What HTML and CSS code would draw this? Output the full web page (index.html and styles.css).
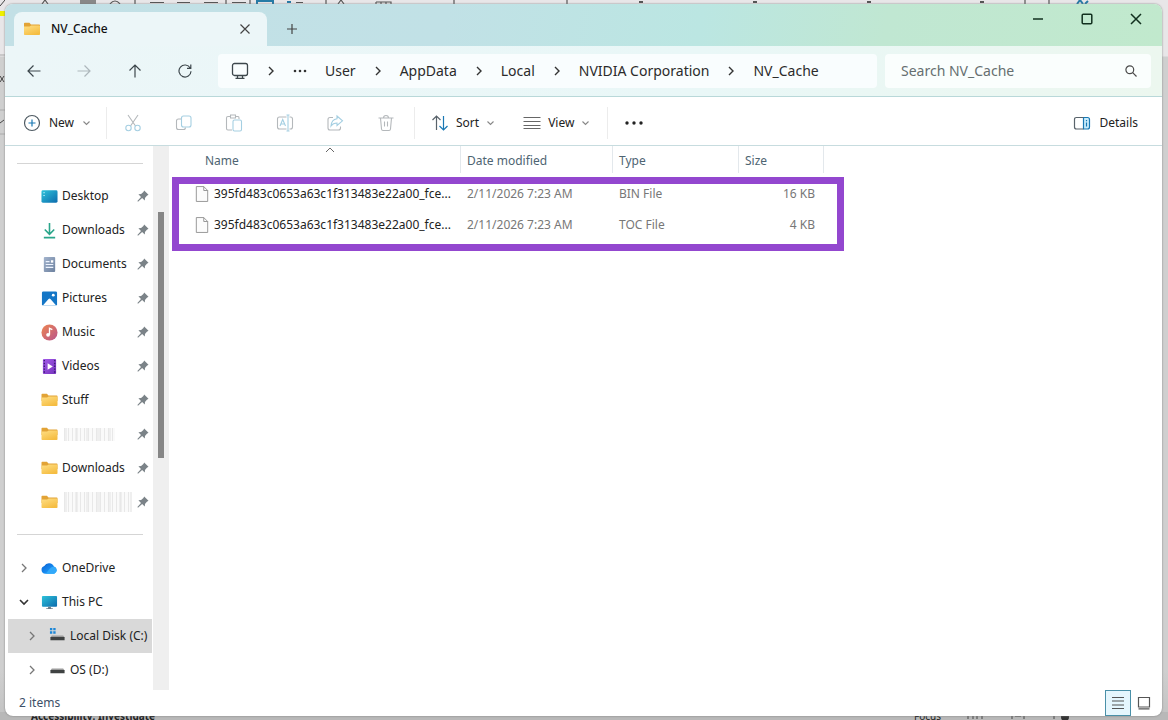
FILE: index.html
```html
<!DOCTYPE html>
<html lang="en">
<head>
<meta charset="utf-8">
<meta name="viewport" content="width=device-width, initial-scale=1">
<title>NV_Cache</title>
<link rel="stylesheet" href="styles.css">
</head>
<body>
<svg class="sprite" aria-hidden="true">
  <defs>
    <linearGradient id="gFolder" x1="0" y1="0" x2="0.6" y2="1"><stop offset="0" stop-color="#ffdf85"/><stop offset="1" stop-color="#f5bd42"/></linearGradient>
    <linearGradient id="gDesk" x1="0" y1="0" x2="1" y2="1"><stop offset="0" stop-color="#2ec3da"/><stop offset="1" stop-color="#0c6bad"/></linearGradient>
    <linearGradient id="gDoc" x1="0" y1="0" x2="1" y2="1"><stop offset="0" stop-color="#a3b4cd"/><stop offset="1" stop-color="#6d819f"/></linearGradient>
    <linearGradient id="gMusic" x1="0" y1="0" x2="1" y2="1"><stop offset="0" stop-color="#ee8550"/><stop offset="1" stop-color="#b8548c"/></linearGradient>
    <linearGradient id="gVideo" x1="0" y1="0" x2="1" y2="1"><stop offset="0" stop-color="#a35be8"/><stop offset="1" stop-color="#7533bd"/></linearGradient>
    <linearGradient id="gCloud" x1="0" y1="0" x2="1" y2="1"><stop offset="0" stop-color="#0a5fd0"/><stop offset="0.5" stop-color="#1687ee"/><stop offset="1" stop-color="#29b4fb"/></linearGradient>
  </defs>
  <symbol id="folder" viewBox="0 0 16 14"><path d="M0 1.6Q0 .8.8.8H5.4L7 2.4H15.2Q16 2.4 16 3.2V8H0Z" fill="#e2a336"/><path d="M0 4.6H5.6L7.2 3.4H15.2Q16 3.4 16 4.2V12.2Q16 13 15.2 13H.8Q0 13 0 12.2Z" fill="url(#gFolder)"/></symbol>
  <symbol id="chevR" viewBox="0 0 8 12"><path d="M2 2 6 6 2 10"/></symbol>
  <symbol id="chevD" viewBox="0 0 12 8"><path d="M2 2 6 6 10 2"/></symbol>
  <symbol id="chevU" viewBox="0 0 12 8"><path d="M2 6 6 2 10 6"/></symbol>
  <symbol id="pin" viewBox="0 0 12 12"><path d="M7.2.5 11.500 4.800 9.900 5.700 8 8 7.800 10.600 5.100 8 1 11.700.4 11.100 4 7 1.400 4.300 4.100 4 6.400 2.100Z" fill="#7b8388"/></symbol>
  <symbol id="file" viewBox="0 0 16 18"><path d="M1.5.5H10L14.5 5V17.5H1.5ZM10 .5V5H14.5" fill="#fcfcfc" stroke="#8b8b8b"/></symbol>
</svg>

<div class="backdrop" aria-hidden="true">
  <svg class="backdrop-ribbon" viewBox="0 0 1168 4">
    <g stroke="#555" stroke-width="1.2" fill="none">
      <path d="M42 4 45 0 48 4M110 4Q115-2 120 4M135 0V4M150 2.5H164M177 2.5H190M204 2.5H218M232 2.5H246M226 0V4M250 0V4M296 2.5H303M326 0V4M338 4 341 0 344 4M376 2H391V4M376 2V4M381 2V4M386 2V4M454 0V4M567 0V4M1025 0V4M1049 0V4"/>
      <path d="M80 2H96" stroke="#888" stroke-width="4"/><path d="M257 4V1H273V4M287 2H291M1077 4 1080 0 1083 4M1085 4 1088 1" stroke="#267ba6" stroke-width="2"/>
      <path d="M639 2H643M753 2H757M867 2H871M980 2H984" stroke-width="2"/>
    </g>
  </svg>
  <svg class="backdrop-edge" viewBox="0 0 5 160"><path d="M0 11H5V16H0Z" fill="#eef000"/><path d="M0 6 5 0M0 76 4 82M4 76 0 82M0 123 4 120" stroke="#444" fill="none"/><path d="M0 55H5M0 110H5M0 134H5" stroke="#aaa"/></svg>
  <div class="backdrop-status">
    <span class="backdrop-a11y">Accessibility: Investigate</span>
    <span class="backdrop-focus">Focus</span>
    <svg class="backdrop-icons" viewBox="0 0 140 10"><g stroke="#444" fill="none"><path d="M2 8V3H16V8M7 3V8M11 3V8M46 8V3H58V8M49 5H55M88 8V3H95M122 4H130"/></g><circle cx="99" cy="6" r="4" fill="#333"/></svg>
  </div>
</div>

<div class="window">
  <header class="titlebar">
    <div class="tab">
      <svg class="tab-folder"><use href="#folder"/></svg>
      <span class="tab-title">NV_Cache</span>
      <button class="plain tab-close" aria-label="Close tab"><svg class="ic12" viewBox="0 0 12 12"><path d="M1.500 1.500 10.500 10.500M10.500 1.500 1.500 10.500"/></svg></button>
    </div>
    <button class="plain tab-new" aria-label="New tab"><svg class="ic12" viewBox="0 0 12 12"><path d="M6 1V11M1 6H11"/></svg></button>
    <div class="caption">
      <button class="plain caption-btn" aria-label="Minimize"><svg class="ic12" viewBox="0 0 12 12"><path d="M1 6H11"/></svg></button>
      <button class="plain caption-btn" aria-label="Maximize"><svg class="ic12" viewBox="0 0 12 12"><rect x="1.2" y="1.2" width="9.6" height="9.6" rx="1"/></svg></button>
      <button class="plain caption-btn" aria-label="Close"><svg class="ic12" viewBox="0 0 12 12"><path d="M1 1 11 11M11 1 1 11"/></svg></button>
    </div>
  </header>

  <nav class="navbar" aria-label="Location">
    <div class="nav-buttons">
      <button class="plain nav-btn" aria-label="Back"><svg class="ic14" viewBox="0 0 14 14"><path d="M13.500 7H1M6.500 1.500 1 7 6.500 12.500"/></svg></button>
      <button class="plain nav-btn nav-btn-off" aria-label="Forward"><svg class="ic14" viewBox="0 0 14 14"><path d="M.5 7H13M7.500 1.500 13 7 7.500 12.500"/></svg></button>
      <button class="plain nav-btn" aria-label="Up"><svg class="ic14" viewBox="0 0 14 14"><path d="M7 13.500V1M1.500 6.500 7 1 12.500 6.500"/></svg></button>
      <button class="plain nav-btn" aria-label="Refresh"><svg class="ic14" viewBox="0 0 14 14"><path d="M12.200 4A6 6 0 1 0 13 7.200M12.800.6V4.400H9"/></svg></button>
    </div>
    <div class="address">
      <svg class="monitor" viewBox="0 0 18 18"><rect x="1.500" y="1.500" width="15" height="12" rx="2"/><path d="M6.500 13.500V16M11.500 13.500V16M4.500 16.300H13.500"/></svg>
      <svg class="crumb-sep"><use href="#chevR"/></svg>
      <button class="plain" aria-label="More folders"><svg class="dots-sm" viewBox="0 0 14 4"><circle cx="2" cy="2" r="1.300"/><circle cx="7" cy="2" r="1.300"/><circle cx="12" cy="2" r="1.300"/></svg></button>
      <a class="crumb" href="#">User</a>
      <svg class="crumb-sep"><use href="#chevR"/></svg>
      <a class="crumb" href="#">AppData</a>
      <svg class="crumb-sep"><use href="#chevR"/></svg>
      <a class="crumb" href="#">Local</a>
      <svg class="crumb-sep"><use href="#chevR"/></svg>
      <a class="crumb" href="#">NVIDIA Corporation</a>
      <svg class="crumb-sep"><use href="#chevR"/></svg>
      <a class="crumb" href="#">NV_Cache</a>
    </div>
    <div class="search">
      <input class="search-input" type="text" placeholder="Search NV_Cache" aria-label="Search NV_Cache">
      <svg class="ic12" viewBox="0 0 12 12"><circle cx="4.800" cy="4.800" r="3.900"/><path d="M7.700 7.700 11.500 11.500"/></svg>
    </div>
  </nav>

  <div class="toolbar">
    <button class="plain tool tool-new">
      <svg class="ic18" viewBox="0 0 18 18"><circle cx="9" cy="9" r="7.500" stroke="#4f5b63"/><path d="M9 5.500V12.500M5.500 9H12.500" stroke="#1978b4"/></svg>
      <span>New</span><svg class="drop"><use href="#chevD"/></svg>
    </button>
    <div class="tool-group">
      <button class="plain tool-icon" aria-label="Cut"><svg class="ic18" viewBox="0 0 18 18"><path d="M4 1 11.500 12M14 1 6.500 12" stroke="#b4b8bb"/><circle cx="4.500" cy="14" r="2.700"/><circle cx="13.500" cy="14" r="2.700"/></svg></button>
      <button class="plain tool-icon" aria-label="Copy"><svg class="ic18" viewBox="0 0 18 18"><path d="M6 5H3.500Q1.500 5 1.500 7V13.500Q1.500 15.500 3.500 15.500H8.500Q10.500 15.500 10.500 13.500" stroke="#b4b8bb"/><rect x="6.500" y="2" width="9.500" height="11" rx="2"/></svg></button>
      <button class="plain tool-icon" aria-label="Paste"><svg class="ic18" viewBox="0 0 18 18"><path d="M5.500 2.500H3Q1.500 2.500 1.500 4V14.500Q1.500 16 3 16H7M10.500 2.500H13Q14 2.500 14 4V5M5.500 1H10.500V4H5.500Z" stroke="#b4b8bb"/><rect x="8" y="6" width="8.500" height="11" rx="1.500"/></svg></button>
      <button class="plain tool-icon" aria-label="Rename"><svg class="ic18" viewBox="0 0 18 18"><path d="M10.500 3H3.500Q1.500 3 1.500 5V13Q1.500 15 3.500 15H10.500M13.500 3H14.500Q16.500 3 16.500 5V13Q16.500 15 14.500 15H13.500" stroke="#b4b8bb"/><path d="M12 1V17M10.500 1H13.500M10.500 17H13.500M4 12 6.700 5.500 9.500 12M5 10H8.500"/></svg></button>
      <button class="plain tool-icon" aria-label="Share"><svg class="ic18" viewBox="0 0 18 18"><path d="M7 3.500H4Q2 3.500 2 5.500V14Q2 16 4 16H12.500Q14.500 16 14.500 14V12.500" stroke="#b4b8bb"/><path d="M11 2 16.500 6.800 11 11.500V9Q7 9 5 12Q5.500 5.500 11 4.800Z"/></svg></button>
      <button class="plain tool-icon" aria-label="Delete"><svg class="ic18" viewBox="0 0 18 18"><path d="M1.500 4H16.500M6.500 4Q6.500 1.500 9 1.500T11.500 4M3.500 4 4.500 15Q4.700 16.500 6 16.500H12Q13.300 16.500 13.500 15L14.500 4M7.500 7.500V12.500M10.500 7.500V12.500" stroke="#b4b8bb"/></svg></button>
    </div>
    <div class="tool-pair">
      <button class="plain tool">
        <svg class="ic18" viewBox="0 0 18 18"><path d="M5.500 16V2M1.500 6 5.500 2 9.500 6" stroke="#59636b"/><path d="M12.500 2V16M8.500 12 12.500 16 16.500 12" stroke="#1978b4"/></svg>
        <span>Sort</span><svg class="drop"><use href="#chevD"/></svg>
      </button>
      <button class="plain tool">
        <svg class="ic18" viewBox="0 0 18 18"><path d="M.5 3.500H17.500M.5 7.500H17.500M.5 11.500H17.500M.5 14.500H17.500" stroke="#666"/></svg>
        <span>View</span><svg class="drop"><use href="#chevD"/></svg>
      </button>
    </div>
    <button class="plain tool-more" aria-label="See more"><svg class="dots" viewBox="0 0 18 4"><circle cx="2" cy="2" r="1.700"/><circle cx="9" cy="2" r="1.700"/><circle cx="16" cy="2" r="1.700"/></svg></button>
    <button class="plain tool tool-details">
      <svg class="ic18" viewBox="0 0 18 18"><path d="M10.500 3.500H14.500Q16.500 3.500 16.500 5.500V13Q16.500 15 14.500 15H10.500Z" fill="#c9ecfb" stroke="#1978b4"/><path d="M10.500 3.500H3.500Q1.500 3.500 1.500 5.500V13Q1.500 15 3.500 15H10.500" stroke="#59636b"/><path d="M13.500 6V7.200M13.500 8.500V12.500" stroke="#1978b4"/></svg>
      <span>Details</span>
    </button>
  </div>

  <div class="content">
    <aside class="sidebar">
      <ul class="tree tree-pinned">
        <li class="node"><svg class="node-ic" viewBox="0 0 18 18"><rect x=".5" y="2.500" width="17" height="13" rx="1.500" fill="url(#gDesk)"/><path d="M2.500 5H4M2.500 8H4" stroke="#c9f6ff"/></svg><span class="node-name">Desktop</span><svg class="pin"><use href="#pin"/></svg></li>
        <li class="node"><svg class="node-ic" viewBox="0 0 18 18"><path d="M9 1V12.500M4 8 9 13 14 8M3 16.500H15" fill="none" stroke="#2aa58a" stroke-width="1.700"/></svg><span class="node-name">Downloads</span><svg class="pin"><use href="#pin"/></svg></li>
        <li class="node"><svg class="node-ic" viewBox="0 0 18 18"><rect x="3" y="1" width="12" height="16" rx="1" fill="url(#gDoc)"/><path d="M5 6H9M5 9H13M5 12H13" stroke="#eef4ff" stroke-width="1.200"/><path d="M10.500 4.500H13V7H10.500Z" fill="#fff"/></svg><span class="node-name">Documents</span><svg class="pin"><use href="#pin"/></svg></li>
        <li class="node"><svg class="node-ic" viewBox="0 0 18 18"><rect x="1" y="1.500" width="16" height="15" rx="1.500" fill="#1476c6"/><path d="M2 16.500 8 9.500Q9 8.500 10 9.500L16 16.500Z" fill="#fff"/><circle cx="13" cy="5.500" r="1.500" fill="#fff"/></svg><span class="node-name">Pictures</span><svg class="pin"><use href="#pin"/></svg></li>
        <li class="node"><svg class="node-ic" viewBox="0 0 18 18"><circle cx="9" cy="9" r="8.500" fill="url(#gMusic)"/><circle cx="7.500" cy="11.500" r="2" fill="#fff"/><path d="M9 11.500V4.500L12 6" fill="none" stroke="#fff" stroke-width="1.400"/></svg><span class="node-name">Music</span><svg class="pin"><use href="#pin"/></svg></li>
        <li class="node"><svg class="node-ic" viewBox="0 0 18 18"><rect x="2" y="1" width="14" height="16" rx="1" fill="url(#gVideo)"/><path d="M3.500 2V17M14.500 2V17" stroke="#3e1b77" stroke-width="1.500" stroke-dasharray="1.500 1.500"/><path d="M7 5.500 12.500 9 7 12.500Z" fill="#fff"/></svg><span class="node-name">Videos</span><svg class="pin"><use href="#pin"/></svg></li>
        <li class="node"><svg class="node-ic node-folder"><use href="#folder"/></svg><span class="node-name">Stuff</span><svg class="pin"><use href="#pin"/></svg></li>
        <li class="node"><svg class="node-ic node-folder"><use href="#folder"/></svg><span class="node-name"><span class="masked masked-short"></span></span><svg class="pin"><use href="#pin"/></svg></li>
        <li class="node"><svg class="node-ic node-folder"><use href="#folder"/></svg><span class="node-name">Downloads</span><svg class="pin"><use href="#pin"/></svg></li>
        <li class="node"><svg class="node-ic node-folder"><use href="#folder"/></svg><span class="node-name"><span class="masked masked-long"></span></span><svg class="pin"><use href="#pin"/></svg></li>
      </ul>
      <ul class="tree tree-drives">
        <li class="node node-root"><svg class="twist"><use href="#chevR"/></svg><svg class="node-ic" viewBox="0 0 18 18"><path d="M4.500 14.500A4.200 4.200 0 0 1 3.500 6.300 5.600 5.600 0 0 1 13.700 7 3.900 3.900 0 0 1 14 14.500Z" fill="url(#gCloud)"/><path d="M5 14.500 9 9.500Q11.500 6.500 14 7.200A3.900 3.900 0 0 1 14 14.500Z" fill="#32a9fa"/></svg><span class="node-name">OneDrive</span></li>
        <li class="node node-root"><svg class="twist twist-open" viewBox="0 0 12 12"><path d="M2 4 6 8 10 4"/></svg><svg class="node-ic" viewBox="0 0 18 18"><rect x="1" y="2" width="16" height="11.500" rx="1" fill="url(#gDesk)"/><path d="M7.500 13.500H10.500V15H12.500V16H5.500V15H7.500Z" fill="#6c7b86"/></svg><span class="node-name">This PC</span></li>
        <li class="node node-child node-selected"><svg class="twist"><use href="#chevR"/></svg><svg class="node-ic" viewBox="0 0 18 18"><path d="M1 0H3.500V2.500H1ZM4.500 0H7V2.500H4.500ZM1 3.500H3.500V6H1ZM4.500 3.500H7V6H4.500Z" fill="#1c86d6"/><path d="M3 8H15L16.500 10H1.500Z" fill="#9b9b9b"/><path d="M1.500 9.500H16.500V13H1.500Z" fill="#3f4242"/></svg><span class="node-name">Local Disk (C:)</span></li>
        <li class="node node-child"><svg class="twist"><use href="#chevR"/></svg><svg class="node-ic" viewBox="0 0 18 18"><path d="M3 7H15L16.500 9H1.500Z" fill="#9b9b9b"/><path d="M1.500 8.500H16.500V12H1.500Z" fill="#3f4242"/></svg><span class="node-name">OS (D:)</span></li>
      </ul>
    </aside>
    <div class="scrollbar"><div class="scroll-thumb"></div></div>
    <main class="files">
      <table class="list">
        <colgroup><col class="col-name"><col class="col-date"><col class="col-type"><col class="col-size"></colgroup>
        <thead>
          <tr><th class="th-name">Name<svg class="sorted"><use href="#chevU"/></svg></th><th>Date modified</th><th>Type</th><th>Size</th></tr>
        </thead>
        <tbody>
          <tr><td class="td-name"><div class="file"><svg class="file-ic"><use href="#file"/></svg><span>395fd483c0653a63c1f313483e22a00_fce...</span></div></td><td>2/11/2026 7:23 AM</td><td>BIN File</td><td class="td-size">16 KB</td></tr>
          <tr><td class="td-name"><div class="file"><svg class="file-ic"><use href="#file"/></svg><span>395fd483c0653a63c1f313483e22a00_fce...</span></div></td><td>2/11/2026 7:23 AM</td><td>TOC File</td><td class="td-size">4 KB</td></tr>
        </tbody>
      </table>
      <div class="highlight"></div>
    </main>
  </div>

  <footer class="statusbar">
    <span class="count">2 items</span>
    <button class="plain view-btn view-btn-on" aria-label="Details view"><svg class="ic14" viewBox="0 0 14 14"><path d="M1 1.500H13M1 5H13M1 9H13M1 12.500H13"/></svg></button>
    <button class="plain view-btn" aria-label="Large icons view"><svg class="ic14" viewBox="0 0 14 14"><path d="M1.500 1.500H12.500V11H1.500ZM1.500 12.800H12.500"/></svg></button>
  </footer>
</div>
</body>
</html>
```
FILE: styles.css
```css
* { box-sizing: border-box; }

body {
  margin: 0;
  height: 100vh;
  padding: 4px 6px 4px 5px;
  display: flex;
  overflow: hidden;
  background: #d6d6d6;
  color: #222;
  font-family: "Noto Sans", "Open Sans", sans-serif;
  font-size: 12px;
  line-height: 18px;
}

.sprite { position: absolute; width: 0; height: 0; }
svg { flex: none; display: block; fill: none; stroke: none; }

.plain {
  display: flex;
  align-items: center;
  justify-content: center;
  padding: 0;
  border: 0;
  background: none;
  color: inherit;
  font: inherit;
}
.plain svg { stroke: currentColor; stroke-width: 1.2; }

.ic12 { width: 12px; height: 12px; }
.ic14 { width: 14px; height: 14px; }
.ic18 { width: 18px; height: 18px; }

/* Document window that sits behind the file manager */
.backdrop { position: absolute; inset: 0; overflow: hidden; background: linear-gradient(#e8e6e8 0, #e8e6e8 56px, #cfcfcf 57px, #cfcfcf 670px, #c2c2c2 100%); }
.backdrop-ribbon { width: 1168px; height: 4px; }
.backdrop-edge { position: absolute; left: 0; top: 0; width: 5px; height: 160px; }
.backdrop-status {
  position: absolute;
  inset: auto 0 0 0;
  height: 8px;
  padding: 0 62px 0 31px;
  display: flex;
  align-items: center;
  font-size: 10px;
  line-height: 8px;
  color: #222;
  background: #b8b8b8;
}
.backdrop-a11y { flex: 1; font-weight: 700; }
.backdrop-focus { padding-right: 25px; }
.backdrop-icons { width: 140px; height: 10px; }

.window {
  position: relative;
  flex: 1;
  min-width: 0;
  display: flex;
  flex-direction: column;
  border-radius: 8px;
  overflow: hidden;
  background: #fff;
  box-shadow: 0 0 2px #777;
}

.titlebar {
  display: flex;
  height: 42px;
  padding-left: 9px;
  background: linear-gradient(100deg, #c3e0e6 0, #c1e1e6 38%, #bbe6e2 60%, #c0e7d2 76%, #c1e9cd 100%);
}
.tab {
  display: flex;
  align-items: center;
  width: 253px;
  margin-top: 8px;
  padding: 0 16px 0 10px;
  border-radius: 8px 8px 0 0;
  background: #ecf6f8;
}
.tab-folder { width: 16px; height: 14px; }
.tab-title { flex: 1; padding-left: 11px; font-weight: 500; color: #111; }
.tab-close, .tab-new { color: #444; }
.tab-new { width: 50px; margin-top: 8px; }
.caption { margin-left: auto; padding-right: 2px; display: flex; height: 30px; color: #12301f; }
.caption-btn { width: 49px; }
.caption-btn svg { stroke-width: 1.5; }

.navbar {
  display: flex;
  align-items: center;
  gap: 8px;
  height: 51px;
  padding-right: 11px;
  border-bottom: 1px solid #b9d8d9;
  background: linear-gradient(90deg, #ecf6f8 0, #e9f7f7 60%, #ecf7ef 100%);
}
.nav-buttons { display: flex; width: 205px; padding-left: 4px; color: #3d474c; }
.nav-btn { flex: 1; }
.nav-btn-off { color: #adb7bb; }
.address {
  flex: 1;
  min-width: 0;
  display: flex;
  align-items: center;
  gap: 18px;
  height: 34px;
  padding-left: 13px;
  border-radius: 4px;
  background: #f9fdfe;
  font-size: 14px;
  white-space: nowrap;
}
.monitor { width: 18px; height: 18px; stroke: #3d474c; stroke-width: 1.3; }
.crumb-sep { width: 8px; height: 12px; stroke: #333; stroke-width: 1.4; }
.plain .dots-sm { width: 14px; height: 4px; fill: #333; stroke: none; }
.crumb { color: #2b2b2b; text-decoration: none; }
.search {
  display: flex;
  align-items: center;
  width: 266px;
  height: 34px;
  padding: 0 14px 0 16px;
  border-radius: 4px;
  background: #fafefd;
}
.search svg { stroke: #4b4b4b; stroke-width: 1.2; }
.search-input { flex: 1; min-width: 0; padding: 0; border: 0; outline: 0; background: none; font: inherit; font-size: 14px; }
.search-input::placeholder { color: #666f70; opacity: 1; }

.toolbar { display: flex; align-items: center; height: 49px; padding-top: 3px; border-bottom: 1px solid #c7dcdf; }
.tool { gap: 8px; }
.drop { width: 9px; height: 6px; }
.plain .drop { stroke: #888; stroke-width: 1.5; }
.tool-new { width: 102px; padding-left: 3px; height: 32px; border-right: 1px solid #ececec; }
.tool-group { display: flex; width: 308px; height: 32px; padding: 0 3px 0 1px; border-right: 1px solid #ececec; color: #a5cfe2; }
.tool-icon { flex: 1; }
.tool-icon svg { stroke-width: 1.1; }
.tool-pair { display: flex; gap: 28px; width: 193px; height: 32px; padding-left: 16px; border-right: 1px solid #ececec; }
.tool-pair .tool { gap: 7px; }
.tool-more { width: 51px; }
.plain .dots { width: 18px; height: 4px; fill: #222; stroke: none; }
.tool-details { margin-left: auto; padding-right: 24px; }

.content { flex: 1; min-height: 0; display: flex; }
.sidebar { width: 148px; padding-top: 17px; }
.tree { margin: 0; padding: 16px 0 0 3px; list-style: none; position: relative; }
.tree::before { content: ""; position: absolute; left: 12px; right: 10px; top: 0; height: 1px; background: #d5d5d5; }
.tree-pinned { margin-bottom: 15px; }
.tree-drives { padding-top: 17px; }
.node { display: flex; align-items: center; height: 34px; padding-left: 33px; margin-right: 1px; white-space: nowrap; }
.node-ic { width: 17px; height: 17px; }
.node-folder { height: 14px; }
.node-name { flex: 1; padding-left: 4px; }
.node-root { padding-left: 10px; }
.node-child { padding-left: 18px; }
.node-selected { background: #d9d9d9; }
.pin { width: 12px; height: 12px; margin-right: 3px; }
.twist { width: 12px; height: 12px; margin-right: 11px; stroke: #777; stroke-width: 1.3; }
.twist-open { stroke: #333; stroke-width: 1.6; }
.masked {
  display: block;
  margin-left: 2px;
  background:
    repeating-linear-gradient(90deg, #e8e8e8 0, #e8e8e8 1px, transparent 1px, transparent 4px),
    repeating-linear-gradient(90deg, #efefef 0, #efefef 3px, #fafafa 3px, #fafafa 11px);
}
.masked-short { width: 51px; height: 13px; }
.masked-long { width: 68px; height: 20px; }

.scrollbar { width: 16px; background: #efefef; }
.scroll-thumb { width: 6px; height: 246px; margin: 66px auto 0; background: #868686; }

.files { position: relative; flex: 1; min-width: 0; padding-left: 26px; }
.list { border-collapse: collapse; table-layout: fixed; width: 629px; color: #777; }
.col-name { width: 266px; }
.col-date { width: 152px; }
.col-type { width: 126px; }
.col-size { width: 85px; }
.list th { position: relative; height: 32px; padding: 0 0 3px 6px; text-align: left; font-weight: 400; color: #4e6472; }
.list th::after { content: ""; position: absolute; right: 0; top: 0; width: 1px; height: 27px; background: #e3e8ec; }
.list .th-name { padding-left: 10px; }
.sorted { position: absolute; left: 129px; top: 0; width: 12px; height: 8px; stroke: #666; stroke-width: 1; }
.list td { height: 31px; padding: 0 0 0 6px; white-space: nowrap; }
.list .td-name { padding: 0; color: #222; }
.list .td-size { padding-right: 9px; text-align: right; }
.file { display: flex; align-items: center; gap: 5px; }
.file-ic { width: 14px; height: 18px; }

/* Marker frame drawn over the file rows */
.highlight { position: absolute; left: 3px; top: 31px; width: 672px; height: 74px; border: 7px solid #9347cf; }

.statusbar { display: flex; align-items: center; height: 26px; padding: 0 5px 0 14px; }
.count { flex: 1; color: #3d5068; }
.view-btn { width: 26px; height: 26px; color: #555; }
.view-btn-on { border: 1px solid #4a90a8; background: #e5f6fd; }
```
